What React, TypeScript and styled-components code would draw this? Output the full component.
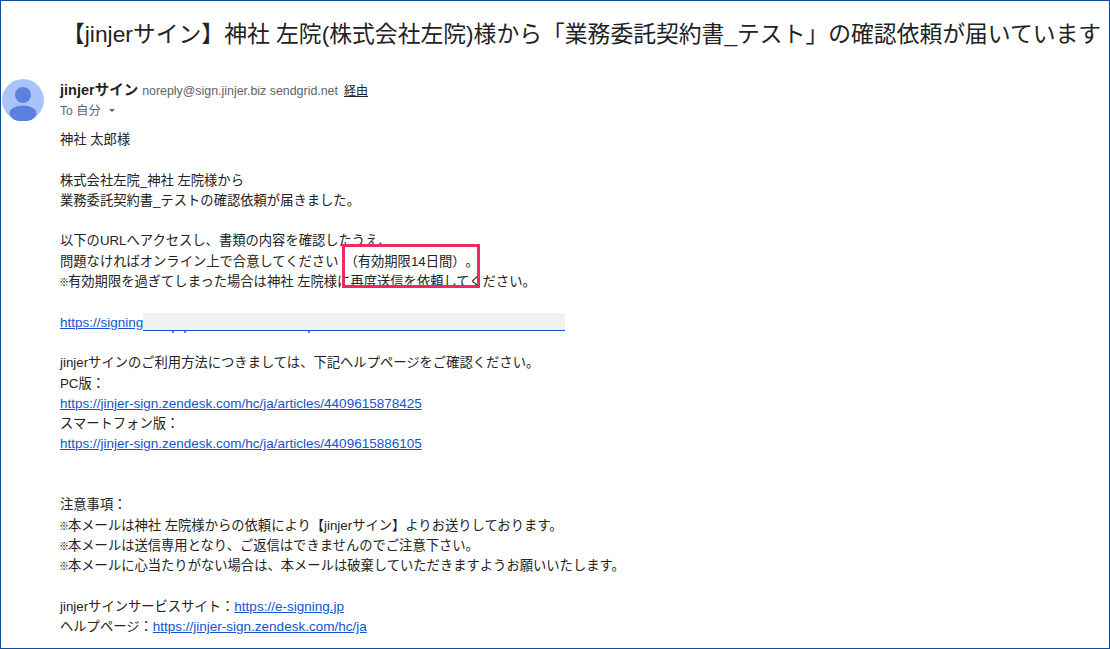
import React from "react";
import styled, { createGlobalStyle } from "styled-components";

const GlobalStyle = createGlobalStyle`
  html, body {
    margin: 0;
    padding: 0;
    background: #fff;
  }
  body {
    font-family: "Liberation Sans", "Noto Sans CJK JP", sans-serif;
    text-spacing-trim: space-all;
  }
`;

const Frame = styled.div`
  box-sizing: border-box;
  width: 1110px;
  height: 649px;
  border: 1px solid #0f4c9c;
  overflow: hidden;
  position: relative;
`;

const Title = styled.h1`
  margin: 0;
  padding: 19px 0 0 61px;
  height: 59px;
  box-sizing: border-box;
  font-size: 22.8px;
  line-height: 28px;
  font-weight: 400;
  color: #222;
  white-space: nowrap;
`;

const SenderRow = styled.div`
  display: flex;
  gap: 16px;
  padding: 19px 0 0 1px;
`;

const Avatar = styled.svg`
  width: 42px;
  height: 42px;
  flex: none;
  display: block;
`;

const SenderInfo = styled.div`
  display: flex;
  flex-direction: column;
  margin-top: 1px;
`;

const SenderLine = styled.div`
  display: flex;
  align-items: baseline;
  gap: 4px;
  height: 20px;
  line-height: 20px;
  white-space: nowrap;
`;

const SenderName = styled.span`
  font-size: 14.5px;
  font-weight: 700;
  color: #1f1f1f;
`;

const SenderMail = styled.span`
  font-size: 12.4px;
  color: #5f6368;
`;

const Via = styled.span`
  font-size: 12px;
  margin-left: 2px;
  color: #222;
  text-decoration: underline;
`;

const ToLine = styled.div`
  display: flex;
  align-items: center;
  gap: 6px;
  height: 20px;
  font-size: 12.2px;
  color: #5f6368;
`;

const Caret = styled.span`
  width: 0;
  height: 0;
  border-left: 3px solid transparent;
  border-right: 3px solid transparent;
  border-top: 3px solid #5f6368;
  margin-left: 2px;
`;

const Body = styled.div`
  padding: 9px 0 0 59px;
  font-size: 13.3px;
  line-height: 20.3px;
  color: #222;
  white-space: nowrap;
`;

const Para = styled.p<{ $gap?: number }>`
  margin: 0 0 ${({ $gap }) => $gap ?? 20.3}px;
`;

const Link = styled.a`
  color: #1155cc;
  font-size: 13.5px;
  line-height: 1;
  text-decoration: underline;
`;

const Note = styled.span`
  font-size: 10px;
  font-weight: 700;
  line-height: 1;
  color: #000;
  margin: 0 -1px;
`;

const Paren = styled.span`
  padding-left: 6px;
`;

const Redacted = styled.span`
  position: relative;
  display: inline-block;
  width: 422px;
  height: 18px;
  background: #f1f1f1;
  border-bottom: 1px solid #1155cc;
  box-sizing: border-box;
  vertical-align: -4px;
`;

const Descender = styled.span<{ $left: number }>`
  position: absolute;
  left: ${({ $left }) => $left}px;
  bottom: -3px;
  width: 2px;
  height: 2px;
  background: #5f86d8;
`;

const Highlight = styled.div`
  position: absolute;
  left: 341px;
  top: 243px;
  width: 138px;
  height: 44px;
  box-sizing: border-box;
  border: 3px solid #ee2a5e;
`;

export default function App() {
  return (
    <>
      <GlobalStyle />
      <Frame>
        <Title>【jinjerサイン】神社 左院(株式会社左院)様から「業務委託契約書_テスト」の確認依頼が届いています</Title>
        <SenderRow>
          <Avatar viewBox="0 0 42 42">
            <circle cx="21" cy="21" r="21" fill="#a8c4fb" />
            <circle cx="21" cy="16" r="8" fill="#5b80de" />
            <ellipse cx="21" cy="34.5" rx="13.5" ry="8" fill="#5b80de" />
          </Avatar>
          <SenderInfo>
            <SenderLine>
              <SenderName>jinjerサイン</SenderName>
              <SenderMail>noreply@sign.jinjer.biz sendgrid.net</SenderMail>
              <Via>経由</Via>
            </SenderLine>
            <ToLine>
              To 自分
              <Caret />
            </ToLine>
          </SenderInfo>
        </SenderRow>
        <Body>
          <Para>神社 太郎様</Para>
          <Para>
            株式会社左院_神社 左院様から
            <br />
            業務委託契約書_テストの確認依頼が届きました。
          </Para>
          <Para>
            以下のURLへアクセスし、書類の内容を確認したうえ、
            <br />
            問題なければオンライン上で合意してください<Paren>（有効期限14日間）。</Paren>
            <br />
            <Note>※</Note>有効期限を過ぎてしまった場合は神社 左院様に再度送信を依頼してください。
          </Para>
          <Para>
            <Link href="#">https://signing</Link>
            <Redacted>
              <Descender $left={29} />
              <Descender $left={41} />
              <Descender $left={165} />
            </Redacted>
          </Para>
          <Para $gap={40.6}>
            jinjerサインのご利用方法につきましては、下記ヘルプページをご確認ください。
            <br />
            PC版：
            <br />
            <Link href="#">https://jinjer-sign.zendesk.com/hc/ja/articles/4409615878425</Link>
            <br />
            スマートフォン版：
            <br />
            <Link href="#">https://jinjer-sign.zendesk.com/hc/ja/articles/4409615886105</Link>
          </Para>
          <Para>
            注意事項：
            <br />
            <Note>※</Note>本メールは神社 左院様からの依頼により【jinjerサイン】よりお送りしております。
            <br />
            <Note>※</Note>本メールは送信専用となり、ご返信はできませんのでご注意下さい。
            <br />
            <Note>※</Note>本メールに心当たりがない場合は、本メールは破棄していただきますようお願いいたします。
          </Para>
          <Para>
            jinjerサインサービスサイト：<Link href="#">https://e-signing.jp</Link>
            <br />
            ヘルプページ：<Link href="#">https://jinjer-sign.zendesk.com/hc/ja</Link>
          </Para>
        </Body>
        <Highlight />
      </Frame>
    </>
  );
}
